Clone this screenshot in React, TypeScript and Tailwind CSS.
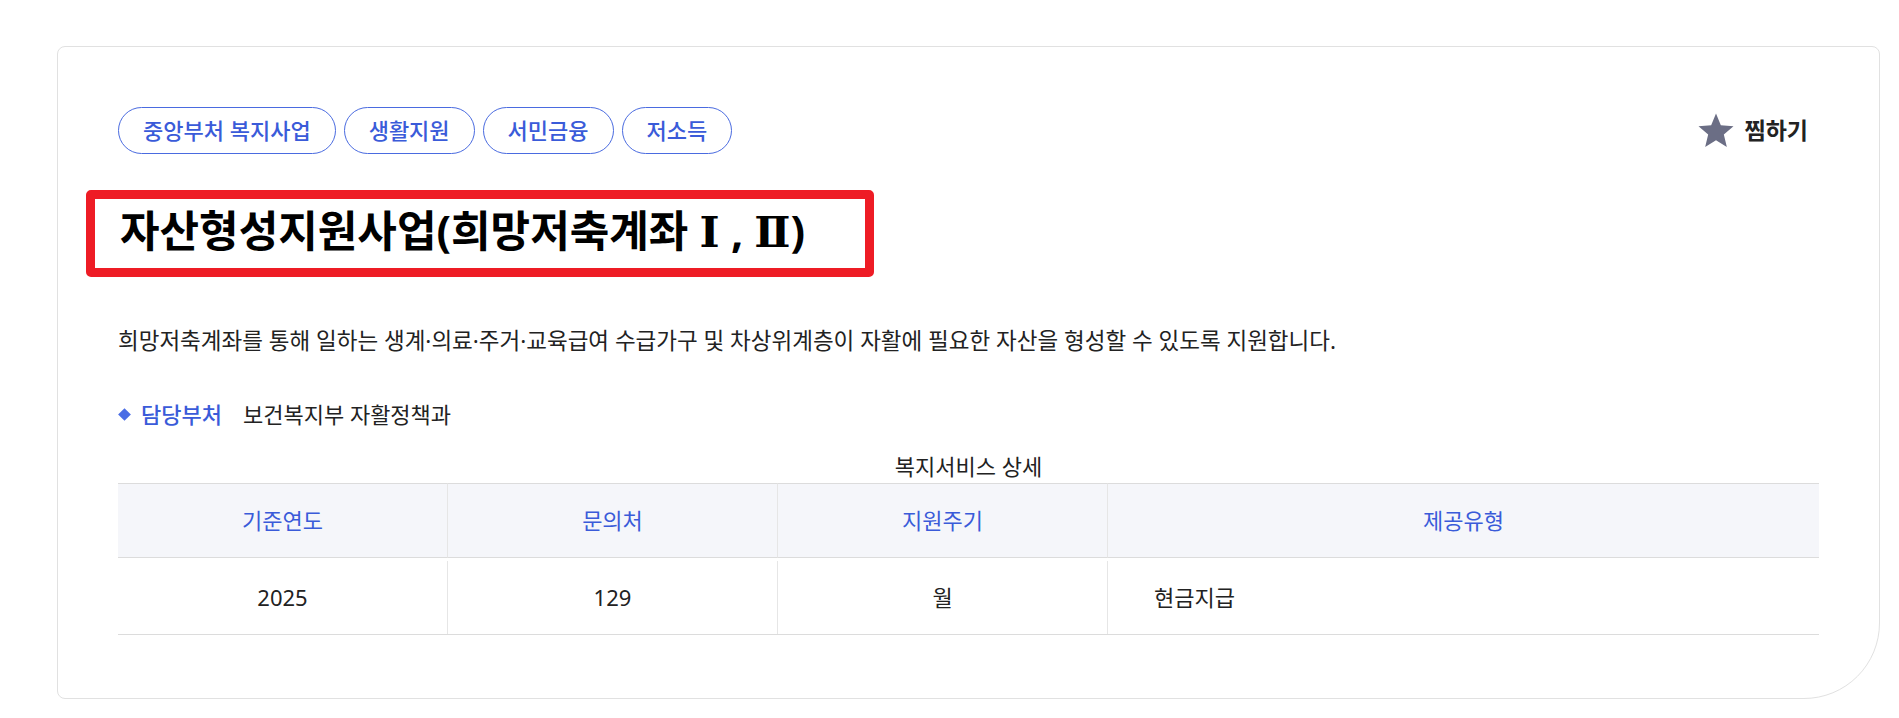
import React from "react";

const tags = ["중앙부처 복지사업", "생활지원", "서민금융", "저소득"];

const columns = [
  { head: "기준연도", value: "2025", align: "center" },
  { head: "문의처", value: "129", align: "center" },
  { head: "지원주기", value: "월", align: "center" },
  { head: "제공유형", value: "현금지급", align: "left" },
];

// roman numerals in the title have serifs
const roman = { fontFamily: '"DejaVu Serif", "Noto Sans CJK KR", serif' };

const App: React.FC = () => {
  return (
    <div
      className="min-h-screen bg-white pt-[46px] pl-[57px] pr-[19px] text-[#222]"
      style={{ fontFamily: '"Noto Sans", "Noto Sans CJK KR", sans-serif' }}
    >
      <div className="border border-[#e1e1e1] rounded-[8px] rounded-br-[76px] px-[60px] pt-[60px] pb-[63px]">
        {/* tags + bookmark */}
        <div className="flex items-center justify-between">
          <div className="flex gap-[8px]">
            {tags.map((tag) => (
              <span
                key={tag}
                className="h-[47px] px-[24px] rounded-full border border-[#4a6be0] text-[22px] font-medium text-[#3a5bd9] flex items-center"
              >
                {tag}
              </span>
            ))}
          </div>
          <button className="flex items-center gap-[9px] mr-[11px]">
            <svg width="40" height="40" viewBox="0 0 24 24">
              <polygon
                points="12,1.5 14.9,8.6 22.5,9.2 16.7,14.1 18.5,21.6 12,17.6 5.5,21.6 7.3,14.1 1.5,9.2 9.1,8.6"
                fill="#6b6e85"
              />
            </svg>
            <span className="text-[23px] font-semibold text-[#222]">찜하기</span>
          </button>
        </div>

        {/* title with highlight box */}
        <div className="mt-[36px] -ml-[32px] w-fit h-[87px] border-[9px] border-[#ee1c25] rounded-[5px] pl-[25px] pr-[60px] pt-[4px]">
          <h1 className="text-[43px] font-bold leading-[56px] text-black whitespace-nowrap">
            자산형성지원사업(희망저축계좌 <span style={roman}>Ⅰ</span> , <span style={roman}>Ⅱ</span>)
          </h1>
        </div>

        <p className="mt-[49px] text-[22.5px] leading-[30px] text-[#222]">
          희망저축계좌를 통해 일하는 생계·의료·주거·교육급여 수급가구 및 차상위계층이 자활에 필요한 자산을 형성할 수 있도록 지원합니다.
        </p>

        <div className="mt-[43px] flex items-center text-[22px] leading-[30px]">
          <span className="w-[9px] h-[9px] bg-[#4a6de5] rotate-45 ml-[2px] mr-[12px]" />
          <span className="font-medium text-[#3a5bd9]">담당부처</span>
          <span className="ml-[21px] text-[#222]">보건복지부 자활정책과</span>
        </div>

        <div className="mt-[22px] mb-[2px] text-center text-[22px] leading-[30px] text-[#222]">
          복지서비스 상세
        </div>

        {/* detail table */}
        <div className="grid grid-cols-[329px_330px_330px_1fr] text-[22px]">
          {columns.map((c, i) => (
            <div
              key={c.head}
              className={`h-[75px] bg-[#f5f6fa] border-t border-b border-[#dcdcdc] flex items-center justify-center text-[#3a5bd9] ${
                i > 0 ? "border-l border-l-[#e6e6e6]" : ""
              }`}
            >
              {c.head}
            </div>
          ))}
          {columns.map((c, i) => (
            <div key={c.value} className="h-[77px] pt-[3px] border-b border-[#dcdcdc]">
              <div
                className={`h-full flex items-center ${
                  c.align === "center" ? "justify-center" : "pl-[46px]"
                } ${i > 0 ? "border-l border-[#e6e6e6]" : ""}`}
              >
                {c.value}
              </div>
            </div>
          ))}
        </div>
      </div>
    </div>
  );
};

export default App;
